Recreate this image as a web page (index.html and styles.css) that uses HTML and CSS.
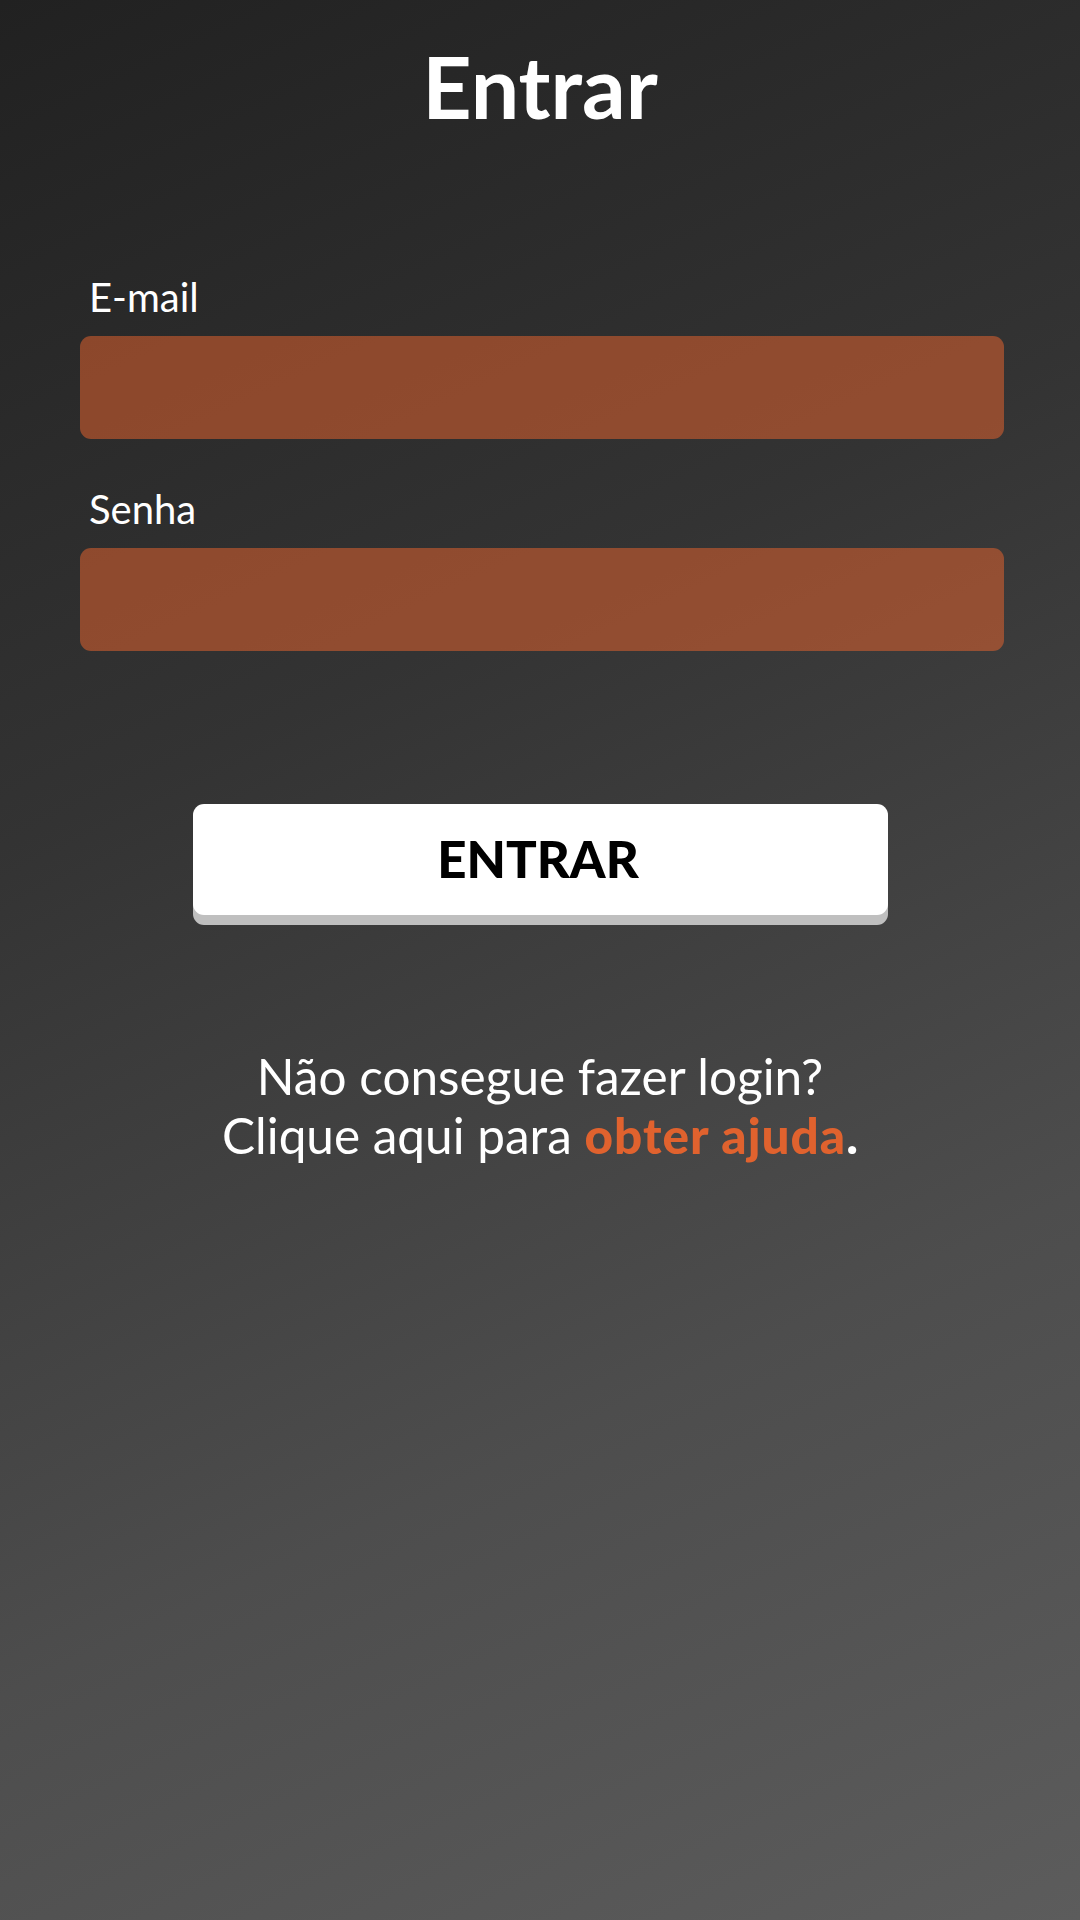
FILE: index.html
```html
<!DOCTYPE html>
<html lang="pt-BR">
<head>
<meta charset="utf-8">
<title>Entrar</title>
<link rel="stylesheet" href="styles.css">
</head>
<body>
<main class="screen">
  <h1 class="title">Entrar</h1>
  <form class="form">
    <div class="field">
      <label class="label" for="email">E-mail</label>
      <input class="input" id="email" type="email">
    </div>
    <div class="field field-second">
      <label class="label" for="senha">Senha</label>
      <input class="input" id="senha" type="password">
    </div>
    <div class="actions">
      <button class="button" type="button">ENTRAR</button>
    </div>
  </form>
  <p class="help">Não consegue fazer login?<br>Clique aqui para <a class="help-link" href="#">obter ajuda</a><b class="help-dot">.</b></p>
</main>
</body>
</html>
```

FILE: styles.css
```css
* { box-sizing: border-box; }

html, body {
  margin: 0;
  padding: 0;
}

body {
  width: 1080px;
  height: 1920px;
  background: linear-gradient(155deg, #212121 0%, #333333 35%, #4d4d4d 70%, #5c5c5c 100%);
  font-family: Lato, "Liberation Sans", sans-serif;
  color: #ffffff;
  overflow: hidden;
}

.screen {
  display: flex;
  flex-direction: column;
  align-items: stretch;
}

.title {
  margin: 34px 0 0;
  font-size: 86px;
  line-height: 104px;
  font-weight: 700;
  text-align: center;
}

.form {
  display: flex;
  flex-direction: column;
  margin: 136px 76px 0 80px;
}

.field {
  display: flex;
  flex-direction: column;
}

.field-second {
  margin-top: 47px;
}

.label {
  font-size: 40px;
  line-height: 46px;
  padding-left: 9px;
  margin-bottom: 16px;
}

.input {
  height: 103px;
  border: none;
  border-radius: 11px;
  background: rgba(226, 98, 46, 0.54);
  outline: none;
}

.actions {
  display: flex;
  justify-content: center;
  margin-top: 153px;
}

.button {
  width: 695px;
  height: 111px;
  margin-left: -4px;
  border: none;
  border-radius: 11px;
  background: #ffffff;
  box-shadow: 0 10px 0 #bfbfbf;
  font-family: Lato, "Liberation Sans", sans-serif;
  font-size: 51px;
  font-weight: 900;
  color: #000000;
  display: flex;
  align-items: center;
  justify-content: center;
  padding: 0 4px 2px 0;
}

.help {
  margin: 132px 0 0;
  font-size: 49.5px;
  line-height: 59px;
  text-align: center;
}

.help-link {
  color: #e0622e;
  font-weight: 900;
  letter-spacing: 1px;
  text-decoration: none;
}

.help-dot {
  font-weight: 900;
}
```
